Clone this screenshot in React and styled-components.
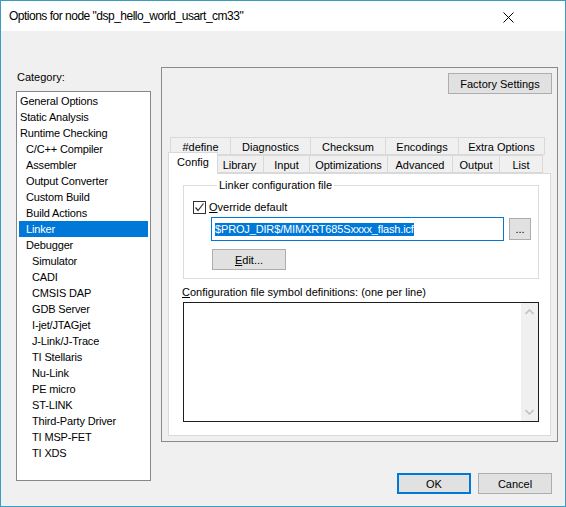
import React from "react"
import styled, { createGlobalStyle } from "styled-components"

const Global = createGlobalStyle`
  * { box-sizing: border-box; }
  html, body { margin: 0; padding: 0; background: #f0f0f0; }
  body {
    font-family: "Liberation Sans", Arial, sans-serif;
    font-size: 11px;
    color: #000;
  }
`

const categories = [
  ["General Options", 0],
  ["Static Analysis", 0],
  ["Runtime Checking", 0],
  ["C/C++ Compiler", 1],
  ["Assembler", 1],
  ["Output Converter", 1],
  ["Custom Build", 1],
  ["Build Actions", 1],
  ["Linker", 1],
  ["Debugger", 1],
  ["Simulator", 2],
  ["CADI", 2],
  ["CMSIS DAP", 2],
  ["GDB Server", 2],
  ["I-jet/JTAGjet", 2],
  ["J-Link/J-Trace", 2],
  ["TI Stellaris", 2],
  ["Nu-Link", 2],
  ["PE micro", 2],
  ["ST-LINK", 2],
  ["Third-Party Driver", 2],
  ["TI MSP-FET", 2],
  ["TI XDS", 2],
]

const upperTabs = [
  ["#define", 61],
  ["Diagnostics", 81],
  ["Checksum", 76],
  ["Encodings", 74],
  ["Extra Options", 87],
]

const lowerTabs = [
  ["Config", 46],
  ["Library", 49],
  ["Input", 47],
  ["Optimizations", 79],
  ["Advanced", 66],
  ["Output", 48],
  ["List", 44],
]

export default function App() {
  return (
    <>
      <Global />
      <Window>
        <TitleBar>
          <Title>Options for node "dsp_hello_world_usart_cm33"</Title>
          <CloseBtn>
            <svg width="11" height="11" viewBox="0 0 11 11">
              <path d="M0.5 0.5 L10.5 10.5 M10.5 0.5 L0.5 10.5" stroke="#000" strokeWidth="1" />
            </svg>
          </CloseBtn>
        </TitleBar>
        <Body>
          <LeftCol>
            <CategoryLabel>Category:</CategoryLabel>
            <CategoryList>
              {categories.map(([name, level]) => (
                <CategoryItem key={name} $level={level} $selected={name === "Linker"}>
                  {name}
                </CategoryItem>
              ))}
            </CategoryList>
          </LeftCol>
          <RightCol>
            <Panel>
              <TopRow>
                <Button $w={104} $h={21}>Factory Settings</Button>
              </TopRow>
              <TabControl>
                <TabRow>
                  {upperTabs.map(([name, w]) => (
                    <Tab key={name} $w={w}>{name}</Tab>
                  ))}
                </TabRow>
                <TabRow>
                  {lowerTabs.map(([name, w]) => (
                    <Tab key={name} $w={w} $selected={name === "Config"}>{name}</Tab>
                  ))}
                </TabRow>
                <TabPage>
                  <Group>
                    <Legend>Linker configuration file</Legend>
                    <CheckRow>
                      <CheckBox>
                        <svg width="11" height="11" viewBox="0 0 11 11">
                          <path d="M1.5 5.5 L4 8.5 L9.5 1.5" fill="none" stroke="#333" strokeWidth="1.2" />
                        </svg>
                      </CheckBox>
                      <span><u>O</u>verride default</span>
                    </CheckRow>
                    <PathRow>
                      <PathField>
                        <Selected>$PROJ_DIR$/MIMXRT685Sxxxx_flash.icf</Selected>
                      </PathField>
                      <Button $w={22} $h={22}>...</Button>
                    </PathRow>
                    <EditRow>
                      <Button $w={74} $h={21}><u>E</u>dit...</Button>
                    </EditRow>
                  </Group>
                  <DefsLabel>
                    <u>C</u>onfiguration file symbol definitions: (one per line)
                  </DefsLabel>
                  <TextBox>
                    <ScrollBar>
                      <svg width="9" height="6" viewBox="0 0 9 6">
                        <path d="M0.5 5 L4.5 1 L8.5 5" fill="none" stroke="#c2c2c2" strokeWidth="1.6" />
                      </svg>
                      <svg width="9" height="6" viewBox="0 0 9 6">
                        <path d="M0.5 1 L4.5 5 L8.5 1" fill="none" stroke="#c2c2c2" strokeWidth="1.6" />
                      </svg>
                    </ScrollBar>
                  </TextBox>
                </TabPage>
              </TabControl>
            </Panel>
            <Footer>
              <Button $w={74} $h={21} $default>OK</Button>
              <Button $w={74} $h={21}>Cancel</Button>
            </Footer>
          </RightCol>
        </Body>
      </Window>
    </>
  )
}

const Window = styled.div`
  width: 566px;
  height: 507px;
  border: 1px solid #3a9cc3;
  display: flex;
  flex-direction: column;
  background: #f0f0f0;
`
const TitleBar = styled.div`
  height: 30px;
  background: #fff;
  display: flex;
  align-items: center;
  justify-content: space-between;
  padding: 0 0 0 8px;
`
const Title = styled.div`
  font-size: 12px;
  letter-spacing: -0.5px;
  color: #000;
`
const CloseBtn = styled.div`
  width: 46px;
  height: 30px;
  display: flex;
  align-items: center;
  justify-content: center;
  margin-right: 34px;
  padding-top: 2px;
`
const Body = styled.div`
  flex: 1;
  display: flex;
  padding-left: 15px;
`
const LeftCol = styled.div`
  width: 135px;
  margin-right: 10px;
  display: flex;
  flex-direction: column;
`
const CategoryLabel = styled.div`
  margin-top: 39px;
  margin-left: 1px;
  line-height: 14px;
  margin-bottom: 7px;
`
const CategoryList = styled.div`
  height: 390px;
  background: #fff;
  border: 1px solid #828790;
  padding: 1px 1px;
`
const CategoryItem = styled.div`
  height: 16px;
  line-height: 16px;
  margin: 0 1px;
  padding-left: ${p => 1 + p.$level * 6}px;
  white-space: nowrap;
  letter-spacing: -0.15px;
  background: ${p => (p.$selected ? "#0078d7" : "transparent")};
  color: ${p => (p.$selected ? "#fff" : "#000")};
`
const RightCol = styled.div`
  width: 397px;
  display: flex;
  flex-direction: column;
  padding-top: 36px;
`
const Panel = styled.div`
  height: 375px;
  border: 1px solid #8a8a8a;
  padding: 5px;
  display: flex;
  flex-direction: column;
`
const TopRow = styled.div`
  display: flex;
  justify-content: flex-end;
`
const Button = styled.div`
  width: ${p => p.$w}px;
  height: ${p => p.$h}px;
  background: #e1e1e1;
  border: ${p => (p.$default ? "2px solid #0078d7" : "1px solid #adadad")};
  display: flex;
  align-items: center;
  justify-content: center;
  flex-shrink: 0;
  white-space: nowrap;
`
const TabControl = styled.div`
  margin: 43px 1px 0 1px;
  display: flex;
  flex-direction: column;
`
const TabRow = styled.div`
  display: flex;
  height: 18px;
  align-items: flex-end;
  padding: 0 2px 0 3px;
`
const Tab = styled.div`
  width: ${p => p.$w + (p.$selected ? 4 : 0)}px;
  height: ${p => (p.$selected ? 22 : 18)}px;
  margin: ${p => (p.$selected ? "0 -2px -1px -3px" : "0 0 0 -1px")};
  border: 1px solid #d9d9d9;
  border-bottom: ${p => (p.$selected ? "none" : "1px solid #d9d9d9")};
  background: ${p => (p.$selected ? "#fff" : "#f0f0f0")};
  position: relative;
  z-index: ${p => (p.$selected ? 2 : 1)};
  display: flex;
  justify-content: center;
  padding-top: 3px;
  flex-shrink: 0;
  white-space: nowrap;
`
const TabPage = styled.div`
  height: 263px;
  background: #fff;
  border: 1px solid #d9d9d9;
  padding: 4px 11px 0 13px;
  display: flex;
  flex-direction: column;
`
const Group = styled.fieldset`
  margin: 0 0 0 1px;
  padding: 0 0 8px 27px;
  border: 1px solid #dcdcdc;
  min-width: 0;
`
const Legend = styled.legend`
  margin-left: 6px;
  padding: 0 2px;
  line-height: 14px;
`
const CheckRow = styled.div`
  display: flex;
  align-items: center;
  height: 16px;
  margin: 7px 0 0 -18px;
  gap: 3px;
`
const CheckBox = styled.div`
  width: 13px;
  height: 13px;
  border: 1px solid #333;
  background: #fff;
  display: flex;
  align-items: center;
  justify-content: center;
`
const PathRow = styled.div`
  display: flex;
  align-items: center;
  gap: 5px;
  margin-top: 2px;
`
const PathField = styled.div`
  width: 293px;
  height: 24px;
  border: 1px solid #0078d7;
  background: #fff;
  display: flex;
  align-items: center;
  padding-left: 3px;
`
const Selected = styled.span`
  background: #0078d7;
  color: #fff;
  line-height: 13px;
  white-space: nowrap;
  letter-spacing: -0.15px;
`
const EditRow = styled.div`
  margin: 8px 0 0 1px;
`
const DefsLabel = styled.div`
  margin-top: 6px;
  line-height: 14px;
`
const TextBox = styled.div`
  margin: 3px 0 0 1px;
  height: 120px;
  border: 1px solid #1e1e1e;
  background: #fff;
  display: flex;
  justify-content: flex-end;
`
const ScrollBar = styled.div`
  width: 17px;
  background: #f0f0f0;
  display: flex;
  flex-direction: column;
  justify-content: space-between;
  align-items: center;
  padding: 6px 0 6px;
`
const Footer = styled.div`
  display: flex;
  justify-content: flex-end;
  gap: 7px;
  margin-top: 31px;
  padding-right: 6px;
`
